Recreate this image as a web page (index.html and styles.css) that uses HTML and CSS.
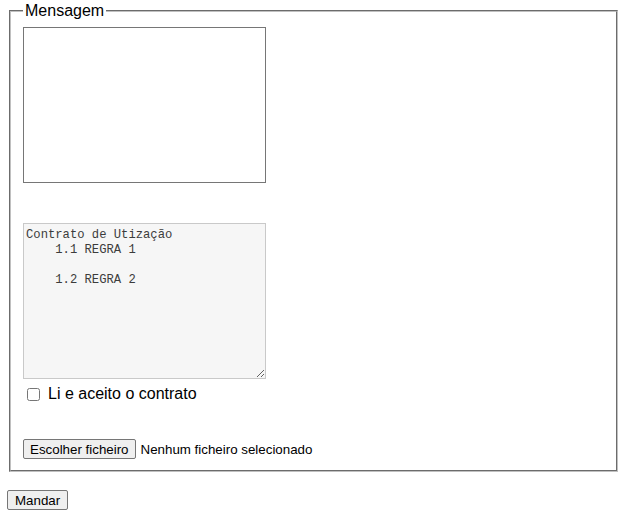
FILE: index.html
```html
<!DOCTYPE html>
<html lang="pt">
<head>
<meta charset="utf-8">
<title>Mensagem</title>
<link rel="stylesheet" href="styles.css">
</head>
<body>
<form class="form">
  <fieldset class="box">
    <legend class="box-legend">Mensagem</legend>
    <textarea class="msg" name="mensagem"></textarea>
    <textarea class="contract" readonly>Contrato de Utização
    1.1 REGRA 1

    1.2 REGRA 2</textarea>
    <label class="agree"><input type="checkbox" class="agree-box"> Li e aceito o contrato</label>
    <div class="file-row">
      <button type="button" class="btn">Escolher ficheiro</button>
      <span class="file-name">Nenhum ficheiro selecionado</span>
    </div>
  </fieldset>
  <div class="actions">
    <button type="submit" class="btn btn-send">Mandar</button>
  </div>
</form>
</body>
</html>
```
FILE: styles.css
```css
html, body {
  margin: 0;
  background: #fff;
}
body {
  padding: 2px 7px 0;
  font-family: "Liberation Sans", Arial, sans-serif;
  font-size: 16px;
  color: #000;
}
.form {
  margin: 0;
}
.box {
  margin: 0 1px 0 2px;
  border: 2px groove #c0c0c0;
  padding: 5px 12px 11px;
  display: flex;
  flex-direction: column;
  align-items: flex-start;
}
.box-legend {
  padding: 0 2px;
  font-size: 16px;
  line-height: 18px;
}
.msg, .contract {
  box-sizing: border-box;
  width: 243px;
  height: 156px;
  margin: 0;
  font-family: "Liberation Mono", monospace;
  font-size: 12.2px;
  line-height: 15px;
}
.msg {
  margin-top: 2px;
  padding: 2px;
  border: 1px solid #767676;
  background: #fff;
  resize: none;
}
.contract {
  margin-top: 40px;
  padding: 4px 2px 2px;
  border: 1px solid #c9c9c9;
  background: #f6f6f6;
  color: #3c3c3c;
  outline: none;
  resize: both;
}
.agree {
  display: flex;
  align-items: center;
  margin-top: 5px;
  height: 20px;
  font-size: 16px;
}
.agree-box {
  width: 13px;
  height: 13px;
  margin: 3px 8px 3px 4px;
}
.file-row {
  display: flex;
  align-items: center;
  margin-top: 35px;
  font-size: 13.33px;
}
.btn {
  box-sizing: border-box;
  height: 20px;
  padding: 0 6px;
  border: 1px solid #767676;
  border-radius: 2px;
  background: #efefef;
  font-family: "Liberation Sans", Arial, sans-serif;
  font-size: 13.33px;
  color: #000;
}
.btn-send {
  padding: 0 7px;
}
.file-name {
  margin-left: 5px;
}
.actions {
  margin-top: 18px;
}
```
